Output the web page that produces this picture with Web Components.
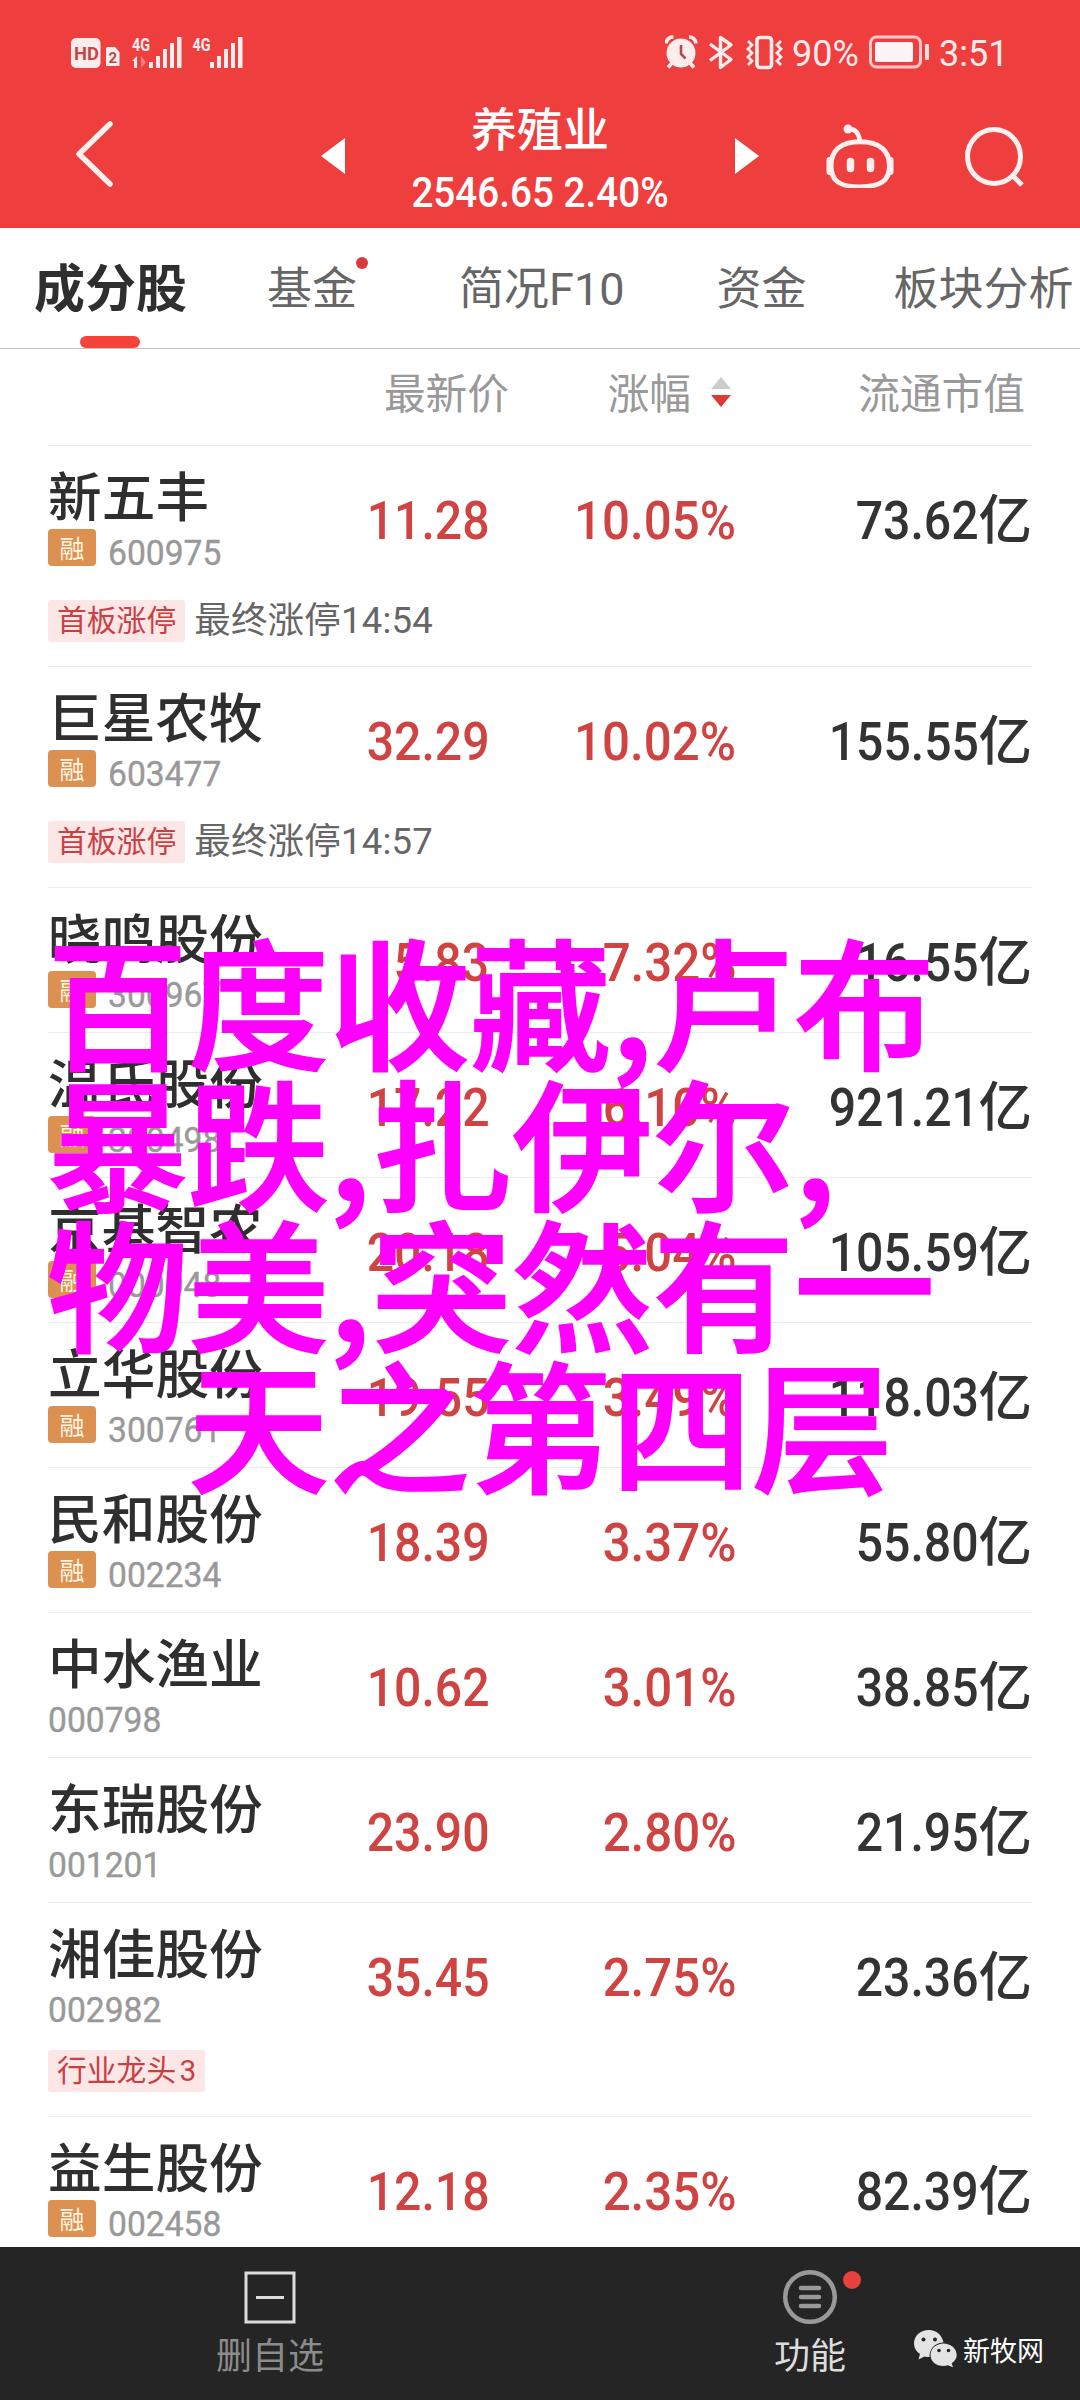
<!DOCTYPE html>
<html lang="zh-CN">
<head>
<meta charset="UTF-8">
<title>养殖业</title>
<style>
  body {
    margin: 0;
    background: #fff;
    font-family: Roboto, "Noto Sans CJK SC", sans-serif;
  }
</style>
</head>
<body>
<sector-page></sector-page>

<script>
const CJK = '"Noto Sans CJK SC", sans-serif';

class StatusBar extends HTMLElement {
  constructor() {
    super();
    this.attachShadow({ mode: 'open' });
  }

  connectedCallback() {
    this.shadowRoot.innerHTML = `
      <style>
        :host {
          display: flex;
          align-items: center;
          height: 104px;
          box-sizing: border-box;
          padding: 0 75px 0 71px;
          color: #ffecec;
          font-size: 36px;
          line-height: 40px;
        }
        svg { display: block; flex: none; }
        .der { margin-left: auto; display: flex; align-items: center; }
        .pct { width: 70px; margin: 3px 0 0 8px; white-space: nowrap; }
        .bat { margin-left: 7px; }
        .hora { width: 66px; margin: 3px 0 0 9px; white-space: nowrap; }
      </style>
      <svg width="174" height="34" viewBox="0 0 174 34" fill="#ffecec" font-family="Roboto" font-weight="700">
        <rect x="0" y="3" width="29.500" height="30" rx="5"/>
        <text x="3" y="25" font-size="18" textLength="25" lengthAdjust="spacingAndGlyphs" fill="#c3484a">HD</text>
        <path d="M36 12h8l4.500 5v14H35V13z"/>
        <text x="37.500" y="28" font-size="15" fill="#b34a4c">2</text>
        <text x="61" y="16" font-size="19" textLength="18" lengthAdjust="spacingAndGlyphs">4G</text>
        <path d="M61 26l5-5v12h-3v-7z"/>
        <path d="M70 21v12l5-6z" fill="#f58080"/>
        <path d="M78 27h4v6h-4zM85 21h4v12h-4zM92 14h4v19h-4zM99 8h4v25h-4zM106 2h4.500v31H106z"/>
        <text x="121.500" y="16" font-size="19" textLength="18" lengthAdjust="spacingAndGlyphs">4G</text>
        <path d="M139 27h4v6h-4zM146 21h4v12h-4zM153 14h4v19h-4zM160 8h4v25h-4zM167 2h4.500v31H167z"/>
      </svg>
      <div class="der">
        <svg width="119" height="36" viewBox="0 0 119 36" fill="none" stroke="#ffecec">
          <circle cx="16" cy="19" r="14.500" fill="#ffecec" stroke="none"/>
          <path d="M1 9.500Q2 3 8.500 3M24 3q6 0 7 6.500M7 29l-4 4.500M25 29l4 4.500" stroke-width="3.600"/>
          <path d="M16 11v9l4.500 4.500" stroke="#b5484a" stroke-width="2.600"/>
          <path d="M45 10l21 15.500-10.500 8V3.500L66 11 45 26.500" stroke-width="3.400" stroke-linejoin="round"/>
          <rect x="92" y="3.500" width="14.500" height="30" rx="3" stroke-width="3.600"/>
          <path d="M83 7l4 4-4 4 4 4-4 4 4 4-4 4M116 7l-4 4 4 4-4 4 4 4-4 4 4 4" stroke-width="2.800"/>
        </svg>
        <span class="pct">90%</span>
        <svg class="bat" width="61" height="34" viewBox="0 0 61 34">
          <rect x="1.500" y="2" width="50" height="30" rx="6" fill="none" stroke="#ffc9c9" stroke-width="3"/>
          <rect x="6" y="7" width="38" height="20" rx="2" fill="#fff3f5"/>
          <rect x="56" y="9" width="4" height="16" rx="1" fill="#ffdede"/>
        </svg>
        <span class="hora">3:51</span>
      </div>
    `;
  }
}

class SectorHeader extends HTMLElement {
  constructor() {
    super();
    this.attachShadow({ mode: 'open' });
  }

  connectedCallback() {
    this.shadowRoot.innerHTML = `
      <style>
        :host { display: block; height: 228px; background: #ef3e3e; color: #fff; }
        nav { display: flex; align-items: flex-start; padding: 0 50px 0 74px; }
        svg { display: block; flex: none; fill: none; stroke: #fff0f0; }
        .relleno { fill: #fff; stroke: none; margin-top: 34px; }
        .centro {
          width: 390px;
          text-align: center;
          white-space: nowrap;
        }
        h1 {
          margin: 0;
          font: 500 46px/44px ${CJK};
        }
        .indice { font-size: 42px; font-weight: 500; line-height: 54px; margin-top: 18px; transform: scaleX(.92); }
      </style>
      <status-bar></status-bar>
      <nav>
        <svg width="40" height="68" viewBox="0 0 40 68" style="margin: 15px 207px 0 0">
          <path d="M36 5L5 35l31 30" stroke-width="5.500" stroke-linecap="round" stroke-linejoin="round"/>
        </svg>
        <svg class="relleno" width="24" height="36" viewBox="0 0 24 36"><path d="M24 0v36L0 18z"/></svg>
        <div class="centro">
          <h1><slot name="titulo"></slot></h1>
          <div class="indice"><slot name="indice"></slot></div>
        </div>
        <svg class="relleno" width="24" height="36" viewBox="0 0 24 36"><path d="M0 0v36l24-18z"/></svg>
        <svg width="70" height="66" viewBox="0 0 70 66" style="margin: 18px 0 0 66px" stroke-width="5">
          <path d="M23 7q10-1 12 12" stroke-width="4.500"/>
          <circle cx="23" cy="7" r="4.500" fill="#fff0f0" stroke="none"/>
          <path d="M35 19c20 0 29.500 10 29.500 25C64.500 60 55 66 35 66S6 60 6 44c0-15 9-25 29-25z" transform="translate(0 1.500) scale(1 .96)"/>
          <path d="M4.500 38v12M65.500 38v12" stroke-width="6" stroke-linecap="round"/>
          <path d="M25.500 39.500v7M45.500 39.500v7" stroke-width="7.500" stroke-linecap="round"/>
        </svg>
        <svg width="62" height="64" viewBox="0 0 62 64" style="margin: 21px 0 0 68px" stroke-width="5">
          <ellipse cx="31" cy="31.500" rx="26.500" ry="27"/>
          <path d="M49 50l10 10"/>
        </svg>
      </nav>
    `;
  }
}

class TabItem extends HTMLElement {
  constructor() {
    super();
    this.attachShadow({ mode: 'open' });
  }

  connectedCallback() {
    this.shadowRoot.innerHTML = `
      <style>
        :host {
          display: block;
          position: relative;
          flex: none;
          height: 120px;
          font: 400 45px/123px Roboto, ${CJK};
          color: #666;
          white-space: nowrap;
        }
        :host([activo]) { font-size: 51px; font-weight: 700; color: #2f2f2f; }
        :host([activo])::after {
          content: "";
          position: absolute;
          left: 50%;
          bottom: 0;
          width: 60px;
          height: 12px;
          margin-left: -31px;
          border-radius: 6px;
          background: #f5433a;
        }
        :host([aviso])::after {
          content: "";
          position: absolute;
          right: -11px;
          top: 29px;
          width: 12px;
          height: 12px;
          border-radius: 50%;
          background: #d63c3c;
        }
      </style>
      <slot></slot>
    `;
  }
}

class TabStrip extends HTMLElement {
  constructor() {
    super();
    this.attachShadow({ mode: 'open' });
  }

  connectedCallback() {
    this.shadowRoot.innerHTML = `
      <style>
        :host {
          display: flex;
          height: 120px;
          padding-left: 34px;
          border-bottom: 1px solid #c4c4c4;
          overflow: hidden;
        }
      </style>
      <slot></slot>
    `;
  }
}

class ListHead extends HTMLElement {
  constructor() {
    super();
    this.attachShadow({ mode: 'open' });
  }

  connectedCallback() {
    this.shadowRoot.innerHTML = `
      <style>
        :host {
          display: grid;
          grid-template-columns: 461px 222px 294px;
          height: 96px;
          padding: 0 48px;
          font: 400 41.700px/85px ${CJK};
          color: #999;
          text-align: right;
        }
        .orden { display: flex; justify-content: flex-end; align-items: center; height: 85px; }
        svg { margin-left: 20px; }
      </style>
      <span>最新价</span>
      <span class="orden">涨幅
        <svg width="20" height="30" viewBox="0 0 20 30">
          <path d="M10 0l10 12H0z" fill="#ccc"/>
          <path d="M0 18h20L10 30z" fill="#dc3a32"/>
        </svg>
      </span>
      <span>流通市值</span>
    `;
  }
}

class StockRow extends HTMLElement {
  constructor() {
    super();
    this.attachShadow({ mode: 'open' });
  }

  connectedCallback() {
    const a = (n) => this.getAttribute(n) || '';
    const etiqueta = a('etiqueta');
    const nota = a('nota');

    this.shadowRoot.innerHTML = `
      <style>
        :host {
          display: block;
          margin: 0 48px;
          border-top: 1px solid #ececec;
        }
        .fila {
          display: grid;
          grid-template-columns: 220px 221px 247px 296px;
          height: 144px;
        }
        .nombre {
          font: 500 53.700px/58px ${CJK};
          color: #2f2f2f;
          padding-top: 19px;
          height: 64px;
          white-space: nowrap;
        }
        .sub { display: flex; }
        .rong {
          width: 48px;
          height: 37px;
          margin-right: 12px;
          border-radius: 4px;
          background: #dc9150;
          color: #fff3e2;
          font: 400 25px/36px ${CJK};
          text-align: center;
        }
        .codigo {
          font-size: 35px;
          line-height: 38px;
          padding-top: 6px;
          color: #999;
          -webkit-text-stroke: .4px #999;
          transform: scaleX(.96);
          transform-origin: left;
        }
        .num {
          font-size: 53.500px;
          font-weight: 500;
          line-height: 60px;
          padding-top: 45px;
          text-align: right;
          color: #cf4343;
          white-space: nowrap;
        }
        .num b {
          display: inline-block;
          font-weight: 500;
          transform: scaleX(.9);
          transform-origin: right;
        }
        .cambio b { transform: scaleX(.92); }
        .cap { color: #333; }
        .extra {
          display: flex;
          align-items: center;
          height: 42px;
          padding: 3px 0 24px;
        }
        .extra.nota { padding-top: 10px; }
        .etiqueta {
          height: 42px;
          padding: 0 9px;
          background: #fce6e6;
          border-radius: 3px;
          color: #c93f44;
          font: 400 29.800px/42px Roboto, ${CJK};
          word-spacing: -4px;
          white-space: nowrap;
        }
        .texto {
          margin-left: 9px;
          color: #666;
          font: 400 36.500px/38px Roboto, ${CJK};
          letter-spacing: .2px;
          white-space: nowrap;
        }
      </style>
      <div class="fila">
        <div>
          <div class="nombre">${a('nombre')}</div>
          <div class="sub">
            ${this.hasAttribute('rong') ? '<span class="rong">融</span>' : ''}
            <span class="codigo">${a('codigo')}</span>
          </div>
        </div>
        <div class="num"><b>${a('precio')}</b></div>
        <div class="num cambio"><b>${a('cambio')}</b></div>
        <div class="num cap"><b>${a('valor')}</b>亿</div>
      </div>
      ${etiqueta
        ? `<div class="extra ${nota ? 'nota' : ''}">
             <span class="etiqueta">${etiqueta}</span>
             ${nota ? `<span class="texto">${nota}</span>` : ''}
           </div>`
        : ''
      }
    `;
  }
}

class BottomBar extends HTMLElement {
  constructor() {
    super();
    this.attachShadow({ mode: 'open' });
  }

  connectedCallback() {
    this.shadowRoot.innerHTML = `
      <style>
        :host {
          display: grid;
          grid-template-columns: 1fr 1fr;
          position: relative;
          height: 153px;
          background: #252525;
          font: 400 36px/44px ${CJK};
        }
        div { display: flex; flex-direction: column; align-items: center; padding-top: 22px; }
        svg { display: block; fill: none; overflow: visible; }
        .quitar { color: #8c8c8c; }
        .menu { color: #ddd; }
        span { margin-top: 6px; }
        .marca {
          position: absolute;
          right: 36px;
          bottom: 28px;
          flex-direction: row;
          padding: 0;
          color: #fff;
          font-size: 27px;
        }
        .marca svg { margin-top: -3px; }
        .marca span { margin: 0 0 0 6px; }
      </style>
      <div class="quitar">
        <svg width="56" height="56" viewBox="0 0 56 56" stroke="#dcdcdc" stroke-width="3">
          <path d="M4 4h48v49H4zM14 28.500h28"/>
        </svg>
        <span>删自选</span>
      </div>
      <div class="menu">
        <svg width="56" height="56" viewBox="0 0 56 56" stroke="#999" stroke-width="4.500">
          <circle cx="28" cy="28" r="24.800"/>
          <path d="M19 19h18M19 28h18M19 37h18" stroke-linecap="round"/>
          <circle cx="70" cy="11" r="9" fill="#e8403a" stroke="none"/>
        </svg>
        <span>功能</span>
      </div>
      <div class="marca">
        <svg width="43" height="37" viewBox="0 0 43 37">
          <path d="M15 0C6.500 0 0 5.800 0 13.500c0 4.500 2.300 8 6 10.500l-1.500 5.500 6-3c1.500.400 3 .600 5 .600C15 19 21 12.500 29.500 12.500 28 5 22.500 0 15 0z" fill="#e4e4e4"/>
          <path d="M29.500 13.500c-7.300 0-13 5-13 11.500S22 36 29.500 36c1.600 0 3-.300 4.500-.700l5 2-1.300-4c3.200-2.200 5-5 5-8.300 0-6.500-6-11.500-13.200-11.500z" fill="#e4e4e4"/>
          <g fill="#252525">
            <circle cx="9.500" cy="9.500" r="2"/><circle cx="21" cy="9.500" r="2"/>
            <circle cx="25" cy="20.500" r="1.800"/><circle cx="34.500" cy="20.500" r="1.800"/>
          </g>
        </svg>
        <span>新牧网</span>
      </div>
    `;
  }
}

// caption that floats over the list, one block per line
class FloatCaption extends HTMLElement {
  constructor() {
    super();
    this.attachShadow({ mode: 'open' });
  }

  connectedCallback() {
    this.shadowRoot.innerHTML = `
      <style>
        :host {
          display: block;
          position: absolute;
          left: 47px;
          top: 927px;
          font: 500 141px/141px ${CJK};
          color: #f0f;
          -webkit-text-stroke: 2px #f0f;
          white-space: nowrap;
        }
        ::slotted(:last-child) { padding-left: 141px; }
      </style>
      <slot></slot>
    `;
  }
}

const ACCIONES = [
  { nombre: '新五丰', codigo: '600975', rong: 1, precio: '11.28', cambio: '10.05%', valor: '73.62', etiqueta: '首板涨停', nota: '最终涨停14:54' },
  { nombre: '巨星农牧', codigo: '603477', rong: 1, precio: '32.29', cambio: '10.02%', valor: '155.55', etiqueta: '首板涨停', nota: '最终涨停14:57' },
  { nombre: '晓鸣股份', codigo: '300967', rong: 1, precio: '5.83', cambio: '7.32%', valor: '16.55' },
  { nombre: '温氏股份', codigo: '300498', rong: 1, precio: '17.22', cambio: '6.10%', valor: '921.21' },
  { nombre: '京基智农', codigo: '000048', rong: 1, precio: '20.18', cambio: '5.04%', valor: '105.59' },
  { nombre: '立华股份', codigo: '300761', rong: 1, precio: '19.55', cambio: '3.49%', valor: '118.03' },
  { nombre: '民和股份', codigo: '002234', rong: 1, precio: '18.39', cambio: '3.37%', valor: '55.80' },
  { nombre: '中水渔业', codigo: '000798', precio: '10.62', cambio: '3.01%', valor: '38.85' },
  { nombre: '东瑞股份', codigo: '001201', precio: '23.90', cambio: '2.80%', valor: '21.95' },
  { nombre: '湘佳股份', codigo: '002982', precio: '35.45', cambio: '2.75%', valor: '23.36', etiqueta: '行业龙头 3' },
  { nombre: '益生股份', codigo: '002458', rong: 1, precio: '12.18', cambio: '2.35%', valor: '82.39' },
];

class SectorPage extends HTMLElement {
  constructor() {
    super();
    this.attachShadow({ mode: 'open' });
  }

  connectedCallback() {
    const filas = ACCIONES.map((accion) => {
      const attrs = Object.entries(accion).map(([k, v]) => `${k}="${v}"`).join(' ');
      return `<stock-row ${attrs}></stock-row>`;
    }).join('');

    this.shadowRoot.innerHTML = `
      <style>
        :host {
          display: flex;
          flex-direction: column;
          position: relative;
          width: 1080px;
          height: 2400px;
          overflow: hidden;
          background: #fff;
        }
        sector-header, tab-strip, list-head, bottom-bar { flex: none; }
        main { flex: 1; min-height: 0; overflow: hidden; }
      </style>
      <sector-header>
        <span slot="titulo">养殖业</span>
        <span slot="indice">2546.65 2.40%</span>
      </sector-header>
      <tab-strip>
        <tab-item activo>成分股</tab-item>
        <tab-item aviso style="margin-left: 80px">基金</tab-item>
        <tab-item style="margin-left: 102px">简况F10</tab-item>
        <tab-item style="margin-left: 92px">资金</tab-item>
        <tab-item style="margin-left: 87px">板块分析</tab-item>
      </tab-strip>
      <list-head></list-head>
      <main>${filas}</main>
      <bottom-bar></bottom-bar>
      <float-caption>
        <div>百度收藏,卢布</div>
        <div>暴跌,扎伊尔,</div>
        <div>物美,突然有一</div>
        <div>天之第四层</div>
      </float-caption>
    `;
  }
}

customElements.define('status-bar', StatusBar);
customElements.define('sector-header', SectorHeader);
customElements.define('tab-item', TabItem);
customElements.define('tab-strip', TabStrip);
customElements.define('list-head', ListHead);
customElements.define('stock-row', StockRow);
customElements.define('bottom-bar', BottomBar);
customElements.define('float-caption', FloatCaption);
customElements.define('sector-page', SectorPage);
</script>
</body>
</html>
